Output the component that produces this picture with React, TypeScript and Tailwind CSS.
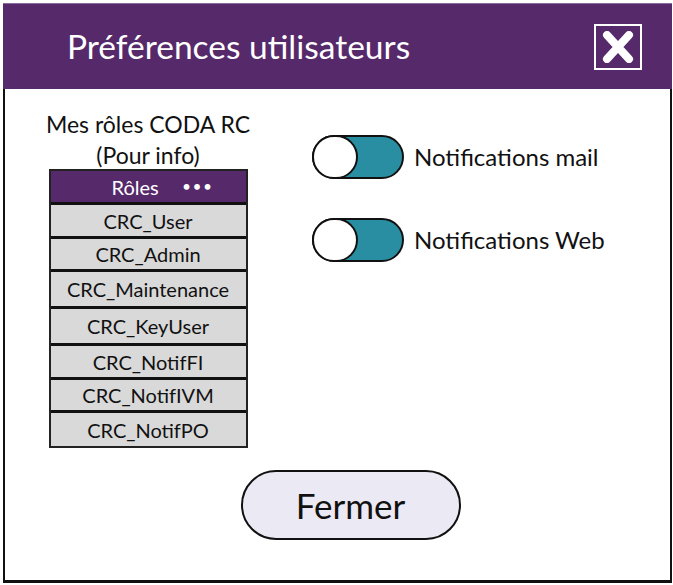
const roles = [
  { name: "CRC_User", h: "h-[34px]" },
  { name: "CRC_Admin", h: "h-[33px]" },
  { name: "CRC_Maintenance", h: "h-[37px]" },
  { name: "CRC_KeyUser", h: "h-[37px]" },
  { name: "CRC_NotifFI", h: "h-[34px]" },
  { name: "CRC_NotifIVM", h: "h-[33px]" },
  { name: "CRC_NotifPO", h: "h-[36px]" },
];

function Toggle({ label }: { label: string }) {
  return (
    <div className="flex items-center gap-[10px]">
      <div className="relative w-[92px] h-[44px] rounded-full bg-[#2a8ea3] border-2 border-[#111]">
        <div className="absolute -left-[2px] -top-[2px] w-[46px] h-[44px] rounded-full bg-white border-2 border-[#111]" />
      </div>
      <span className="text-[24px] text-[#111]">{label}</span>
    </div>
  );
}

export default function App() {
  return (
    <div className="w-[673px] h-[585px] bg-white p-[3px] font-['Lato',sans-serif]">
      <div className="w-[669px] h-[580px] flex flex-col">
        <header className="h-[86px] bg-[#56296b] border-t border-[#8a6aa0] flex items-center justify-between pl-[64px] pr-[30px]">
          <h1 className="text-[33.5px] text-white">Préférences utilisateurs</h1>
          <button className="w-[48px] h-[46px] border-2 border-white flex items-center justify-center" aria-label="Fermer">
            <svg width="34" height="32" viewBox="0 0 34 32">
              <path d="M6 4 L28 28 M28 4 L6 28" stroke="white" strokeWidth="8" strokeLinecap="round" />
            </svg>
          </button>
        </header>

        <main className="flex-1 border-l-2 border-r-2 border-b-[3px] border-[#111] flex flex-col">
          <div className="flex pt-[20px]">
            <div className="w-[200px] ml-[43px] flex flex-col items-center">
              <div className="text-[23px] leading-[31px] text-[#111] text-center whitespace-nowrap">
                Mes rôles CODA RC
                <br />
                (Pour info)
              </div>
              <div className="w-[199px] mt-[-2px] border-2 border-[#222] flex flex-col">
                <div className="h-[31px] bg-[#56296b] text-white text-[20px] flex items-center justify-center gap-[24px] pl-[30px]">
                  <span>Rôles</span>
                  <span className="tracking-[3px] font-bold text-[13px]">•••</span>
                </div>
                {roles.map((r) => (
                  <div
                    key={r.name}
                    className={`${r.h} bg-[#d9d9d9] border-t-[3px] border-[#111] text-[20px] text-[#111] flex items-center justify-center`}
                  >
                    {r.name}
                  </div>
                ))}
              </div>
            </div>

            <div className="ml-[64px] mt-[26px] flex flex-col gap-[39px]">
              <Toggle label="Notifications mail" />
              <Toggle label="Notifications Web" />
            </div>
          </div>

          <div className="flex justify-center mt-[22px] pl-[26px]">
            <button className="w-[220px] h-[70px] rounded-full bg-[#ebe9f4] border-2 border-[#111] text-[35px] text-[#111]">
              Fermer
            </button>
          </div>
        </main>
      </div>
    </div>
  );
}
